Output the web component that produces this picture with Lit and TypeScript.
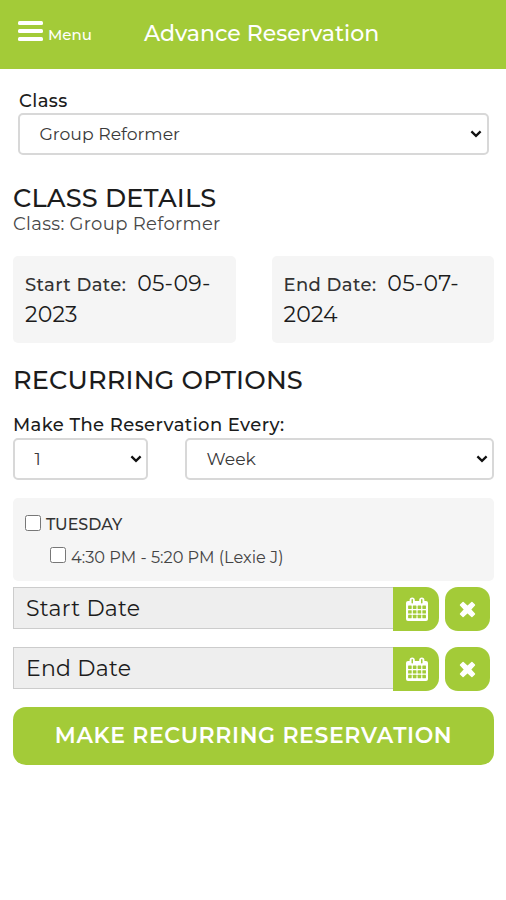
import { LitElement, html, css, svg } from "lit";
import { customElement } from "lit/decorators.js";

const chevron = html`<svg width="12" height="8" viewBox="0 0 12 8"><path d="M1.4 1.4 L6 5.8 L10.6 1.4" fill="none" stroke="#111" stroke-width="2.3"/></svg>`;

const holes = [0, 1, 2].flatMap((row) =>
  [0, 1, 2, 3].map((col) => svg`<rect x=${2.1 + col * 4.75} y=${8.6 + row * 4.6} width="3.6" height="3.4" rx=".4"/>`)
);
const calendar = html`<svg width="22" height="24" viewBox="0 0 22 24">
  <path d="M2 4 H3.6 V3 A2.6 2.6 0 0 1 8.8 3 V4 H13.2 V3 A2.6 2.6 0 0 1 18.4 3 V4 H20 A2 2 0 0 1 22 6 V22 A2 2 0 0 1 20 24 H2 A2 2 0 0 1 0 22 V6 A2 2 0 0 1 2 4Z" fill="#fff"/>
  <g fill="#a3cb38">${holes}<rect x="5.5" y="2" width="1.5" height="4.4" rx=".7"/><rect x="15" y="2" width="1.5" height="4.4" rx=".7"/></g>
</svg>`;
const cross = html`<svg width="17" height="17" viewBox="0 0 17 17"><path d="M4.1 1.5 L8.5 5.6 L12.9 1.5 L15.5 4.1 L11.4 8.5 L15.5 12.9 L12.9 15.5 L8.5 11.4 L4.1 15.5 L1.5 12.9 L5.6 8.5 L1.5 4.1Z" fill="#fff" stroke="#fff" stroke-width="1.4" stroke-linejoin="round"/></svg>`;

@customElement("app-root")
export class AppRoot extends LitElement {
  static styles = css`
    :host { display: block; height: 900px; overflow: hidden; background: #fff; color: #1c1c1c; font-family: Montserrat, Inter, sans-serif; font-size: 18px; line-height: 22px; }
    * { box-sizing: border-box; }
    svg { display: block; flex: none; }
    span { white-space: nowrap; }
    header { height: 69px; background: #a3cb38; color: #fff; display: flex; font-weight: 500; padding: 0 18px; align-items: center; }
    .bars { display: flex; flex-direction: column; gap: 4px; width: 25px; margin: -7px 5px 0 0; }
    .bars i { height: 4px; border-radius: 1.5px; background: #fff; }
    .menu { font-size: 15px; width: 96px; }
    .title { font-size: 22px; margin-top: -2px; }
    .class { padding: 21px 17px 0 18px; }
    .class .label { padding-left: 1px; }
    .label { font-weight: 500; letter-spacing: .4px; }
    .select { border: 2px solid #d8d8d8; border-radius: 5px; height: 42px; display: flex; align-items: center; justify-content: space-between; padding: 0 5px 0 19.5px; background: #fff; margin-top: 1px; font-size: 17.25px; color: #3a3a3a; }
    main { padding: 28px 12px 0 13px; }
    h2 { margin: 0; font-size: 25.6px; line-height: 30px; font-weight: 500; letter-spacing: .18px; }
    .sub { color: #484848; letter-spacing: .32px; }
    .dates { display: grid; grid-template-columns: 222.5px 222.5px; justify-content: space-between; margin: 21px 0 22px; }
    .card { background: #f5f5f5; border-radius: 5px; height: 87px; padding: 12px; line-height: 31px; font-size: 22px; letter-spacing: .2px; }
    .card .label { font-size: 18px; letter-spacing: .4px; line-height: 1; color: #333; margin-right: 5px; }
    .every { margin-top: 19px; }
    .row { display: grid; grid-template-columns: 135px 309px; justify-content: space-between; margin-top: 1px; }
    .row .select { padding-right: 4px; }
    .panel { background: #f5f5f5; border-radius: 5px; height: 83px; margin: 18px 0 6px; padding: 16px 12px; }
    .check { display: flex; align-items: center; gap: 5px; font-size: 15.9px; font-weight: 500; color: #333; }
    .slot { margin: 10px 0 0 25px; font-weight: 400; font-size: 16.2px; color: #444; }
    .box { width: 16px; height: 16px; border: 1px solid #777; border-radius: 2.5px; background: #fff; margin-top: -4px; }
    .pick { display: flex; height: 44px; align-items: flex-start; margin-bottom: 16px; }
    .field { width: 380px; height: 42px; background: #eee; border: 1px solid #ccc; border-right: 0; padding-left: 12px; font-size: 22px; line-height: 41px; letter-spacing: .26px; }
    .btn { height: 44px; background: #a3cb38; display: grid; place-items: center; width: 46px; border-radius: 0 13px 13px 0; padding: 0 0 1px 2px; }
    .clear { width: 45px; border-radius: 13px; margin-left: 6px; padding: 1px 1px 0 0; }
    .go { height: 57.5px; border-radius: 13px; background: #a3cb38; color: #fff; font-weight: 600; font-size: 22px; letter-spacing: .62px; display: grid; place-items: center; }
  `;

  private select(value: string) {
    return html`<div class="select"><span>${value}</span>${chevron}</div>`;
  }

  private picker(label: string) {
    return html`<div class="pick">
      <div class="field">${label}</div>
      <div class="btn">${calendar}</div>
      <div class="btn clear">${cross}</div>
    </div>`;
  }

  render() {
    return html`
      <header>
        <div class="bars"><i></i><i></i><i></i></div>
        <span class="menu">Menu</span><span class="title">Advance Reservation</span>
      </header>
      <section class="class"><div class="label">Class</div>${this.select("Group Reformer")}</section>
      <main>
        <h2>CLASS DETAILS</h2>
        <div class="sub">Class: Group Reformer</div>
        <div class="dates">
          <div class="card"><span class="label">Start Date:</span> 05-09-<br>2023</div>
          <div class="card"><span class="label">End Date:</span> 05-07-<br>2024</div>
        </div>
        <h2>RECURRING OPTIONS</h2>
        <div class="label every">Make The Reservation Every:</div>
        <div class="row">${this.select("1")}${this.select("Week")}</div>
        <div class="panel">
          <div class="check"><i class="box"></i><span>TUESDAY</span></div>
          <div class="check slot"><i class="box"></i><span>4:30 PM - 5:20 PM (Lexie J)</span></div>
        </div>
        ${this.picker("Start Date")}${this.picker("End Date")}
        <div class="go">MAKE RECURRING RESERVATION</div>
      </main>`;
  }
}
